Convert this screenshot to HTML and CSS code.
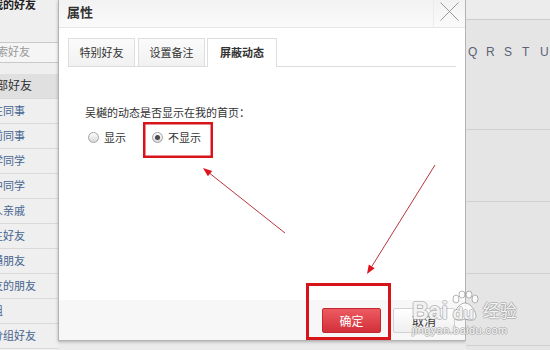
FILE: index.html
```html
<!DOCTYPE html>
<html lang="zh-CN">
<head>
    <meta charset="UTF-8">
    <title>属性</title>
    <link rel="stylesheet" href="styles.css">
</head>
<body>
<div class="page">
    <!-- 左侧好友分组 -->
    <div class="friends">
        <div class="friends-title">我的好友</div>
        <div class="friends-search">搜索好友</div>
        <ul class="groups">
            <li class="current">全部好友</li>
            <li>在同事</li>
            <li>前同事</li>
            <li>学同学</li>
            <li>中同学</li>
            <li>人亲戚</li>
            <li>生好友</li>
            <li>通朋友</li>
            <li>友的朋友</li>
            <li>组</li>
            <li>分组好友</li>
        </ul>
    </div>

    <!-- 弹窗 -->
    <div class="stage">
        <div class="dialog">
            <div class="dialog-head">
                <span class="dialog-title">属性</span>
                <a class="dialog-close">
                    <svg width="19" height="19" viewBox="0 0 19 19">
                        <path d="M0.5 0.5 L18.5 18.5 M18.5 0.5 L0.5 18.5" stroke="#9a9a9a" stroke-width="1" fill="none"/>
                    </svg>
                </a>
            </div>
            <div class="tabs">
                <span class="tab">特别好友</span>
                <span class="tab">设置备注</span>
                <span class="tab active">屏蔽动态</span>
            </div>
            <div class="dialog-body">
                <p class="question">吴樾的动态是否显示在我的首页：</p>
                <div class="choices">
                    <label class="choice"><span class="radio"></span>显示</label>
                    <label class="choice"><span class="radio on"></span>不显示</label>
                </div>
            </div>
            <div class="dialog-foot">
                <button class="btn btn-ok">确定</button>
                <button class="btn btn-cancel">取消</button>
            </div>
        </div>
    </div>

    <!-- 右侧字母索引 -->
    <div class="side">
        <div class="side-top"></div>
        <div class="letters"><span>Q</span><span>R</span><span>S</span><span>T</span><span>U</span></div>
        <div class="side-row"></div>
        <div class="side-row"></div>
        <div class="side-row"></div>
    </div>

    <!-- 标注 -->
    <svg class="marks" width="550" height="350" viewBox="0 0 550 350">
        <rect x="144.25" y="123.25" width="67.5" height="33.5" fill="none" stroke="#d8141b" stroke-width="2.5"/>
        <rect x="307.5" y="284.5" width="82" height="54" fill="none" stroke="#d8141b" stroke-width="3"/>
        <line x1="285" y1="233" x2="210" y2="173.6" stroke="#b8373c" stroke-width="1"/>
        <polygon points="203,168 212.2,170.9 207.9,176.3" fill="#e0141c"/>
        <line x1="435" y1="165" x2="371.8" y2="266.4" stroke="#b8373c" stroke-width="1"/>
        <polygon points="367,274 374.7,268.2 368.8,264.5" fill="#e0141c"/>
    </svg>

    <div class="watermark">
        <div class="wm-logo">
            <span class="wm-bai">Bai</span>
            <span class="wm-paw">
                <svg width="28" height="32" viewBox="0 0 28 32">
                    <g fill="rgba(255,255,255,0.85)" stroke="rgba(130,130,130,0.6)" stroke-width="1">
                        <ellipse cx="5" cy="9" rx="3" ry="4"/>
                        <ellipse cx="11" cy="4.5" rx="3" ry="3.5"/>
                        <ellipse cx="18" cy="4.5" rx="3" ry="3.5"/>
                        <ellipse cx="24" cy="9" rx="3" ry="4"/>
                        <path d="M14 13 C8 13 3 22 3 26 C3 31 9 31 14 29 C19 31 25 31 25 26 C25 22 20 13 14 13 Z"/>
                    </g>
                </svg>
                <span class="wm-du">du</span>
            </span>
            <span class="wm-jy">经验</span>
        </div>
        <div class="wm-url">jingyan.baidu.com</div>
    </div>
</div>
</body>
</html>
```

FILE: styles.css
```css
body {
    margin: 0;
    font-family: "Liberation Sans", "Noto Sans CJK SC", sans-serif;
    font-size: 12px;
    color: #333;
}
.page {
    position: relative;
    width: 550px;
    height: 350px;
    overflow: hidden;
    display: flex;
    background-color: #e9e9e9;
}

/* 左侧好友分组 */
.friends {
    width: 58px;
    flex: none;
    overflow: hidden;
    background-color: #efefef;
    white-space: nowrap;
}
.friends-title {
    height: 11px;
    line-height: 11px;
    font-size: 11px;
    font-weight: bold;
    color: #222;
    text-indent: -8px;
}
.friends-search {
    margin-top: 31px;
    height: 19px;
    line-height: 19px;
    border-top: 1px solid #c9c9c9;
    border-bottom: 1px solid #c9c9c9;
    background-color: #f5f5f5;
    color: #9a9a9a;
    font-size: 11px;
    text-indent: -14px;
}
.groups {
    list-style: none;
    margin: 11px 0 0;
    padding: 0;
}
.groups li {
    height: 24px;
    line-height: 24px;
    border-bottom: 1px solid #dadada;
    font-size: 11px;
    color: #46658f;
    text-indent: -8px;
}
.groups li.current {
    background-color: #e0e0e0;
    color: #333;
    font-size: 12px;
    text-indent: -16px;
}

/* 弹窗 */
.stage {
    width: 408px;
    flex: none;
    background-color: #ebebeb;
}
.dialog {
    height: 341px;
    box-sizing: border-box;
    display: flex;
    flex-direction: column;
    background-color: #fff;
    border: 1px solid #b3b3b3;
    border-top: none;
    box-shadow: 0 1px 3px rgba(0,0,0,0.25);
}
.dialog-head {
    display: flex;
    height: 27px;
    border-bottom: 1px solid #e6e6e6;
    background: linear-gradient(#f2f2f2, #fafafa);
}
.dialog-title {
    flex: 1;
    padding-left: 8px;
    line-height: 25px;
    font-size: 13px;
    font-weight: bold;
    color: #333;
}
.dialog-close {
    width: 32px;
    border-left: 1px solid #ececec;
    display: flex;
    justify-content: center;
    padding-top: 2px;
    box-sizing: border-box;
}
.tabs {
    display: flex;
    gap: 3px;
    margin: 10px 9px 0;
    border-bottom: 1px solid #dcdcdc;
}
.tab {
    width: 65px;
    height: 27px;
    line-height: 28px;
    text-align: center;
    font-size: 11px;
    border: 1px solid #dedede;
    border-bottom: none;
    background: linear-gradient(#fbfbfb, #f1f1f1);
}
.tab.active {
    width: 68px;
    margin-left: -1px;
    height: 28px;
    margin-bottom: -1px;
    background: #fff;
    font-weight: bold;
}
.dialog-body {
    padding: 39px 0 0 26px;
}
.question {
    margin: 0;
    line-height: 14px;
    font-size: 11px;
    color: #333;
}
.choices {
    display: flex;
    gap: 26px;
    margin-top: 9px;
    padding-left: 3px;
}
.choice {
    display: flex;
    align-items: center;
    gap: 5px;
    height: 16px;
    font-size: 11px;
}
.radio {
    width: 11px;
    height: 11px;
    box-sizing: border-box;
    border-radius: 50%;
    border: 1px solid #a3a3a3;
    background: linear-gradient(#fdfdfd, #d8d8d8);
    display: flex;
    align-items: center;
    justify-content: center;
}
.radio.on:after {
    content: '';
    width: 5px;
    height: 5px;
    border-radius: 50%;
    background-color: #4a4a4a;
}
.dialog-foot {
    margin-top: auto;
    height: 40px;
    box-sizing: border-box;
    padding: 8px 10px 0 0;
    display: flex;
    justify-content: flex-end;
    gap: 12px;
    background-color: #f7f7f7;
}
.btn {
    height: 25px;
    border-radius: 2px;
    font-family: "Liberation Sans", "Noto Sans CJK SC", sans-serif;
    font-size: 12px;
    padding: 0;
}
.btn-ok {
    width: 59px;
    color: #fff;
    border: 1px solid #c4262e;
    background: linear-gradient(#ee5a61, #d2303a);
}
.btn-cancel {
    width: 62px;
    color: #333;
    border: 1px solid #d2d2d2;
    background: linear-gradient(#ffffff, #efefef);
}

/* 右侧字母索引 */
.side {
    width: 84px;
    flex: none;
    background-color: #e5e5e5;
}
.side-top {
    height: 19px;
    background-color: #ececec;
    border-bottom: 1px solid #cdcdcd;
}
.letters {
    width: 100px;
    height: 110px;
    box-sizing: border-box;
    padding: 26px 0 0 2px;
    border-bottom: 1px solid #cfcfcf;
    font-size: 12px;
    line-height: 12px;
    color: #5a6276;
    white-space: nowrap;
}
.letters span {
    display: inline-block;
    width: 18px;
}
.side-row {
    height: 71px;
    border-bottom: 1px solid #cfcfcf;
}

/* 标注与水印 */
.marks {
    position: absolute;
    left: 0;
    top: 0;
    pointer-events: none;
}
.watermark {
    position: absolute;
    left: 412px;
    top: 290px;
    color: rgba(255,255,255,0.9);
    text-shadow: 1px 0 0 rgba(150,150,150,0.55), -1px 0 0 rgba(150,150,150,0.55), 0 1px 0 rgba(150,150,150,0.55), 0 -1px 0 rgba(150,150,150,0.55);
    pointer-events: none;
}
.wm-logo {
    display: flex;
    align-items: flex-end;
    height: 33px;
}
.wm-bai {
    font-size: 23px;
    font-weight: bold;
    line-height: 23px;
}
.wm-paw {
    position: relative;
    width: 28px;
    height: 33px;
    margin-left: 3px;
}
.wm-du {
    position: absolute;
    left: 2px;
    bottom: 0;
    font-size: 17px;
    font-weight: bold;
    line-height: 18px;
}
.wm-jy {
    margin-left: 4px;
    font-size: 17px;
    line-height: 22px;
}
.wm-url {
    font-size: 11px;
    line-height: 12px;
    margin-top: 1px;
    letter-spacing: 0.4px;
}
```
